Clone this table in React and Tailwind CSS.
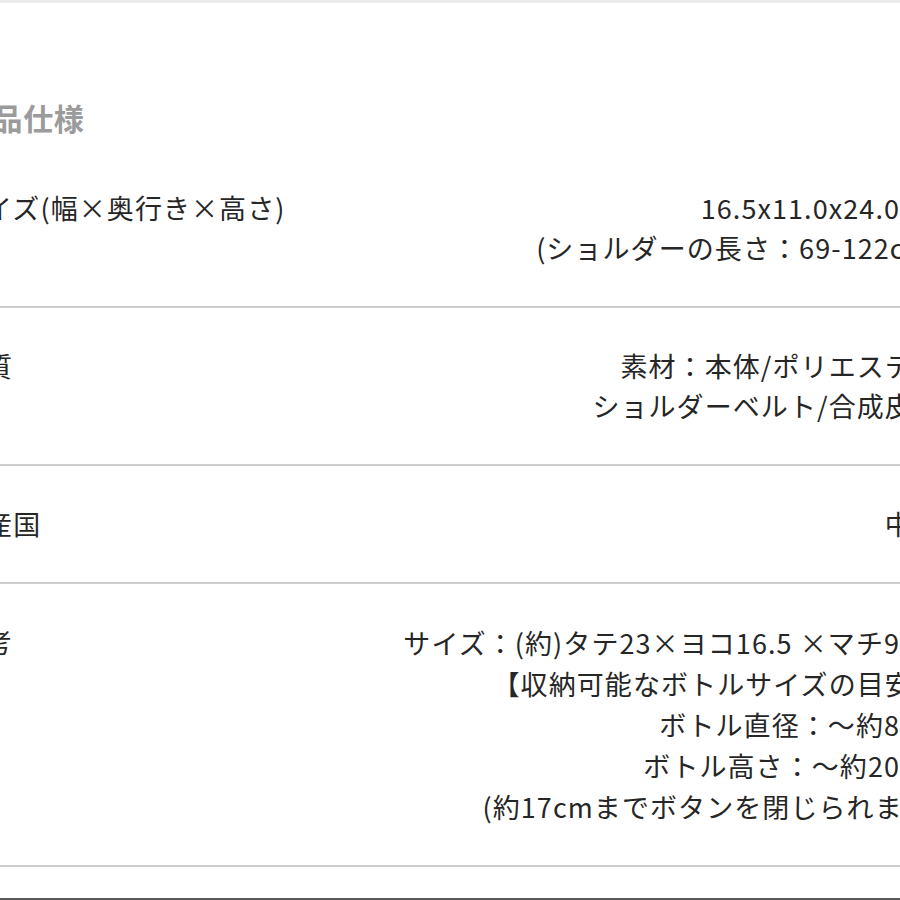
export default function App() {
  const rows = [
    { label: "サイズ(幅×奥行き×高さ)", values: ["16.5x11.0x24.0cm", "(ショルダーの長さ：69-122cm)"], lh: "leading-[40px]" },
    { label: "材質", values: ["素材：本体/ポリエステル", "ショルダーベルト/合成皮革"], lh: "leading-[40px]" },
    { label: "生産国", values: ["中国"], lh: "leading-[40px]" },
    {
      label: "備考",
      values: [
        "サイズ：(約)タテ23×ヨコ16.5 ×マチ9cm",
        "【収納可能なボトルサイズの目安】",
        "ボトル直径：～約8cm",
        "ボトル高さ：～約20cm",
        "(約17cmまでボタンを閉じられます)",
      ],
      lh: "leading-[41px]",
    },
  ];
  return (
    <div
      className="w-[900px] h-[900px] overflow-hidden bg-white flex flex-col"
      style={{ fontFamily: '"Noto Sans CJK JP", "Noto Sans", sans-serif' }}
    >
      <div className="h-[3px] bg-[#ebebeb] shrink-0" />
      <div className="ml-[-43px] w-[984px] flex-1">
        <div className="ml-[5px] pt-[94px] pb-[13px] text-[30px] leading-[40px] font-bold text-[#9b9b9b] tracking-[0.02em]">
          商品仕様
        </div>
        {rows.map((r, i) => (
          <div
            key={i}
            className="flex justify-between py-[38px] border-b-2 border-[#cdcdcd] text-[27px] text-[#262626] tracking-[0.04em]"
          >
            <div className="leading-[40px] whitespace-nowrap">{r.label}</div>
            <div className={`${r.lh} text-right whitespace-nowrap`}>
              {r.values.map((v, j) => (
                <div key={j}>{v}</div>
              ))}
            </div>
          </div>
        ))}
      </div>
      <div className="h-[2px] bg-[#5a5a5a] shrink-0" />
    </div>
  );
}
